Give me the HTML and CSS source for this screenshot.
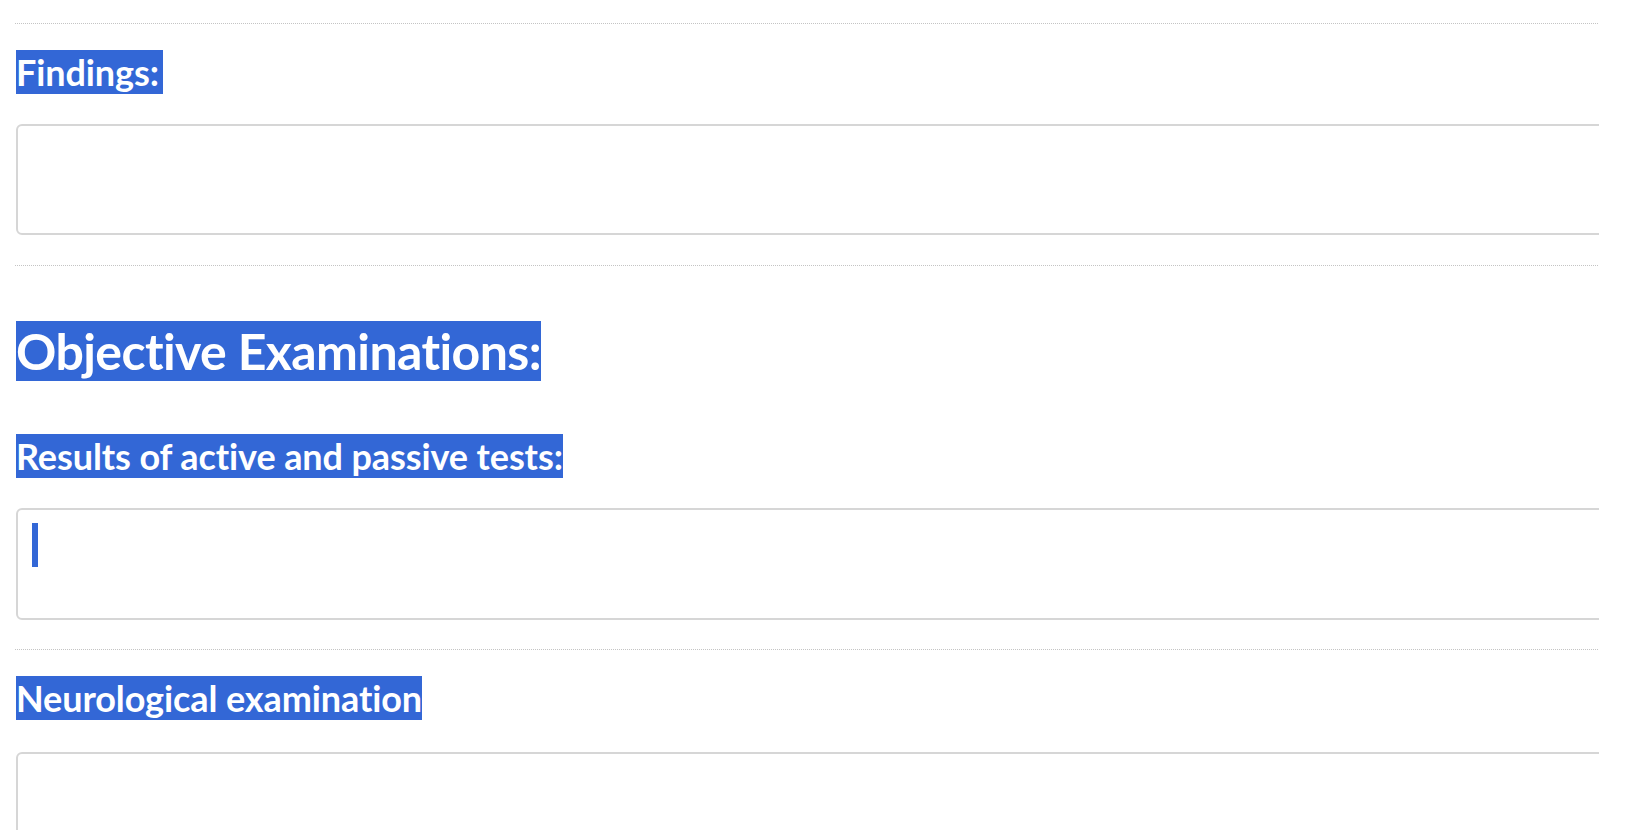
FILE: index.html
```html
<!DOCTYPE html>
<html lang="en">
<head>
<meta charset="utf-8">
<title>Examination form</title>
<link rel="stylesheet" href="styles.css">
</head>
<body>
<main class="page">
  <div class="divider d1"></div>
  <div class="label l1"><span class="sel">Findings:</span></div>
  <div class="field f1"></div>
  <div class="divider d2"></div>
  <h2 class="title"><span class="sel">Objective Examinations:</span></h2>
  <div class="label l2"><span class="sel">Results of active and passive tests:</span></div>
  <div class="field f2"><span class="caret"></span></div>
  <div class="divider d3"></div>
  <div class="label l3"><span class="sel">Neurological examination</span></div>
  <div class="field f3"></div>
</main>
</body>
</html>
```
FILE: styles.css
```css
html, body {
  margin: 0;
  padding: 0;
  background: #ffffff;
}
body {
  font-family: Lato, "Open Sans", "Liberation Sans", sans-serif;
}
.page {
  width: 1583px;
  height: 830px;
  padding-left: 16px;
  overflow: hidden;
}
.divider {
  height: 0;
  border-top: 1px dotted #c4c4c4;
  margin-right: -1px;
}
.d1 { margin-top: 23px; margin-left: -1px; }
.d2 { margin-top: 30px; margin-left: -1px; }
.d3 { margin-top: 29px; margin-left: -1px; }
.sel {
  background: #3367d6;
  color: #ffffff;
}
.label {
  font-size: 36px;
  font-weight: 700;
  line-height: 1.2;
  letter-spacing: -0.1px;
  white-space: nowrap;
}
.l1 { margin-top: 27px; }
.l1 .sel { padding-right: 4px; }
.l2 { margin-top: 54px; }
.l3 { margin-top: 27px; }
.title {
  margin: 55px 0 0 0;
  font-size: 50px;
  font-weight: 700;
  line-height: 1.2;
  letter-spacing: -0.6px;
  white-space: nowrap;
}
.field {
  box-sizing: border-box;
  width: 1700px;
  height: 112px;
  border: 2px solid #d6d6d6;
  border-radius: 6px;
  padding: 13px 14px;
}
.f1 { margin-top: 30px; height: 111px; }
.f2 { margin-top: 30px; }
.f3 { margin-top: 31px; height: 140px; }
.caret {
  display: block;
  width: 6px;
  height: 44px;
  background: #3367d6;
}
```
